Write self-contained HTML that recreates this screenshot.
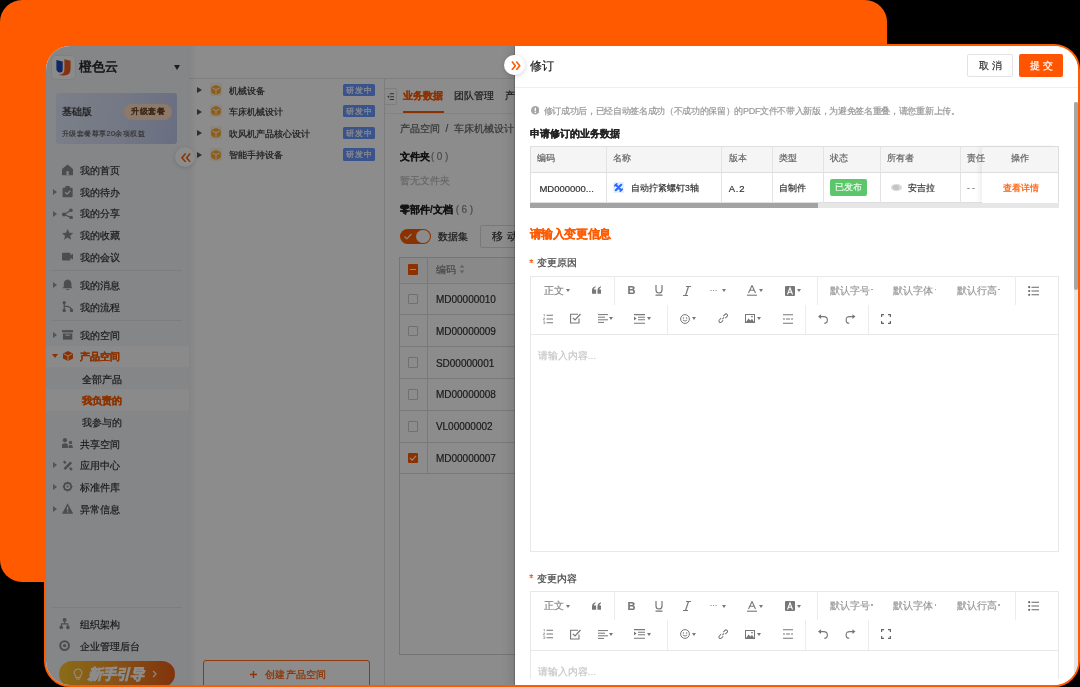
<!DOCTYPE html>
<html><head><meta charset="utf-8">
<style>
*{box-sizing:border-box;margin:0;padding:0}
html,body{width:1080px;height:687px;overflow:hidden;background:#000}
body{position:relative;font-family:"Liberation Sans",sans-serif;color:#222}
.abs{position:absolute}
.t{position:absolute;white-space:nowrap;line-height:1;-webkit-text-stroke:0.2px currentColor}
#orange{position:absolute;left:0;top:0;width:887px;height:582px;background:#ff5a00;border-radius:22px}
#win{position:absolute;left:44px;top:44px;width:1036px;height:643px;border:2px solid #ff5a00;border-radius:26px;overflow:hidden;background:#fff}
#app{position:absolute;left:-46px;top:-46px;width:1080px;height:687px;will-change:transform}
#side{position:absolute;left:46px;top:46px;width:143px;height:641px;background:#f2f4f7}
#list{position:absolute;left:189px;top:46px;width:196px;height:641px;background:#fff}
#main{position:absolute;left:385px;top:46px;width:200px;height:641px;background:#fff}
#mask{position:absolute;left:46px;top:46px;width:469px;height:641px;background:rgba(0,0,0,.45)}
#drawer{position:absolute;left:515px;top:46px;width:565px;height:641px;background:#fff;box-shadow:-4px 0 10px rgba(0,0,0,.12)}
.mi{font-size:10px;color:#333}
.ic{position:absolute}
</style></head><body>
<div id="orange"></div>
<div id="win"><div id="app">
  <!-- SIDEBAR -->
  <div id="side"></div>
  <div class="abs" style="left:46px;top:345.6px;width:143px;height:21.8px;background:#fbfbfb"></div>
    <div class="abs" style="left:46px;top:389px;width:143px;height:21.8px;background:#fbfbfb"></div>
  <div class="abs" style="left:51px;top:270px;width:131px;height:1px;background:#e3e3e3"></div>
  <div class="abs" style="left:51px;top:320px;width:131px;height:1px;background:#e3e3e3"></div>
  <div class="abs" style="left:51px;top:607px;width:131px;height:1px;background:#e3e3e3"></div>
  <div class="abs" style="left:50.5px;top:54.7px;width:25px;height:25.5px;border-radius:5px;background:#fdfdfd;border:1px solid #eaeaea"></div>
  <svg class="abs" style="left:50.5px;top:54.7px" width="25" height="25" viewBox="0 0 25 25">
    <path d="M5.4 5.1L11.7 6.6V15.2Q11.7 17.8 9 17.6Q5.4 17.2 5.4 13.5Z" fill="#1c49b8"/>
    <path d="M13.4 4.2L19.6 5.7V13.5Q19.6 20.6 12.5 20.5L7.6 20Q11.9 19.2 12.8 17.2Q13.4 16.2 13.4 14.6Z" fill="#ee5a1d"/>
  </svg>
  <div class="t" style="left:78.5px;top:60px;font-size:13px;line-height:14px;font-weight:normal;color:#222;-webkit-text-stroke:0.5px #222">橙色云</div>
  <div class="abs" style="left:174px;top:65px;width:0;height:0;border-top:5px solid #333;border-left:3.5px solid transparent;border-right:3.5px solid transparent"></div>
  <div class="abs" style="left:56px;top:93.4px;width:121px;height:50.6px;border-radius:3px;background:linear-gradient(100deg,#dfe7f8 0%,#d3dbf2 55%,#c0c8ec 100%)"></div>
  <div class="t" style="left:62px;top:106px;font-size:10px;line-height:11px;font-weight:500;color:#333;-webkit-text-stroke:0.25px #333">基础版</div>
  <div class="abs" style="left:124px;top:103.6px;width:48px;height:16px;border-radius:8px;background:#ffdcc0"></div>
  <div class="t" style="left:131px;top:107px;font-size:8px;line-height:9px;font-weight:normal;color:#6a4020;letter-spacing:0.5px;-webkit-text-stroke:0.45px #6a4020">升级套餐</div>
  <div class="t" style="left:62px;top:130px;font-size:7.4px;line-height:8px;color:#666;letter-spacing:0.4px">升级套餐尊享20余项权益</div>
  <div class="abs" style="left:58.6px;top:661px;width:116px;height:26px;border-radius:13px;background:linear-gradient(90deg,#fcc42c 0%,#f7952a 50%,#ec5e16 100%)"></div>
  <svg class="abs" style="left:72.5px;top:667.5px" width="10" height="13" viewBox="0 0 10 13"><path d="M5 1a3.8 3.8 0 0 1 2.2 6.9V9.5H2.8V7.9A3.8 3.8 0 0 1 5 1Z" fill="none" stroke="#fff" stroke-width="1.1"/><path d="M3.2 11h3.6" stroke="#fff" stroke-width="1.1"/></svg>
  <div class="t" style="left:87.5px;top:666.5px;font-size:14.2px;line-height:15px;font-weight:bold;font-style:italic;color:#fff;-webkit-text-stroke:0.7px #fff">新手引导</div>
  <svg class="abs" style="left:151.5px;top:670px" width="5" height="8" viewBox="0 0 5 8"><path d="M1 0.8L4 4L1 7.2" stroke="#fff" stroke-width="1.2" fill="none"/></svg>

<div class="t mi" style="left:79.5px;top:165.8px;height:10px;line-height:10px;color:#333;font-weight:normal">我的首页</div>
<svg class="abs" style="left:62.0px;top:164.4px" width="11.2" height="11.2" viewBox="0 0 10 10" fill="#8c8c8c"><path d="M5 0.5L10 4.5V10H0V4.5Z"/><rect x="4" y="6.5" width="2" height="3.5" fill="#f2f4f7"/></svg>
<div class="t mi" style="left:79.5px;top:187.8px;height:10px;line-height:10px;color:#333;font-weight:normal">我的待办</div>
<div class="abs" style="left:53px;top:189.0px;width:0;height:0;border-left:4px solid #999;border-top:3px solid transparent;border-bottom:3px solid transparent"></div>
<svg class="abs" style="left:62.0px;top:186.4px" width="11.2" height="11.2" viewBox="0 0 10 10" fill="#8c8c8c"><rect x="0.5" y="1.5" width="9" height="8.5" rx="0.8"/><rect x="3" y="0" width="4" height="2.5" rx="0.5"/><path d="M2.8 5.6l1.7 1.6 2.9-3" stroke="#f2f4f7" stroke-width="1.1" fill="none"/></svg>
<div class="t mi" style="left:79.5px;top:209.3px;height:10px;line-height:10px;color:#333;font-weight:normal">我的分享</div>
<div class="abs" style="left:53px;top:210.5px;width:0;height:0;border-left:4px solid #999;border-top:3px solid transparent;border-bottom:3px solid transparent"></div>
<svg class="abs" style="left:62.0px;top:207.9px" width="11.2" height="11.2" viewBox="0 0 10 10" fill="#8c8c8c"><circle cx="1.8" cy="5.8" r="1.8"/><circle cx="8" cy="2" r="1.6"/><circle cx="8.2" cy="8.6" r="1.6"/><path d="M1.8 5.8L8 2M1.8 5.8L8.2 8.6" stroke="#8c8c8c" stroke-width="1" fill="none"/></svg>
<div class="t mi" style="left:79.5px;top:230.8px;height:10px;line-height:10px;color:#333;font-weight:normal">我的收藏</div>
<svg class="abs" style="left:62.0px;top:229.4px" width="11.2" height="11.2" viewBox="0 0 10 10" fill="#8c8c8c"><path d="M5 0L6.5 3.4L10 3.7L7.3 6L8.1 9.6L5 7.7L1.9 9.6L2.7 6L0 3.7L3.5 3.4Z"/></svg>
<div class="t mi" style="left:79.5px;top:252.5px;height:10px;line-height:10px;color:#333;font-weight:normal">我的会议</div>
<svg class="abs" style="left:62.0px;top:251.1px" width="11.2" height="11.2" viewBox="0 0 10 10" fill="#8c8c8c"><rect x="0" y="1.5" width="7.5" height="7" rx="0.8"/><path d="M7 4L10 2.3V7.7L7 6Z"/></svg>
<div class="t mi" style="left:79.5px;top:280.6px;height:10px;line-height:10px;color:#333;font-weight:normal">我的消息</div>
<div class="abs" style="left:53px;top:281.8px;width:0;height:0;border-left:4px solid #999;border-top:3px solid transparent;border-bottom:3px solid transparent"></div>
<svg class="abs" style="left:62.0px;top:279.2px" width="11.2" height="11.2" viewBox="0 0 10 10" fill="#8c8c8c"><path d="M5 0.5C7.4 0.5 8.4 2.5 8.4 4.5V7L9.6 8.3H0.4L1.6 7V4.5C1.6 2.5 2.6 0.5 5 0.5Z"/><rect x="3.8" y="8.9" width="2.4" height="1.1" rx="0.5"/></svg>
<div class="t mi" style="left:79.5px;top:302.5px;height:10px;line-height:10px;color:#333;font-weight:normal">我的流程</div>
<svg class="abs" style="left:62.0px;top:301.1px" width="11.2" height="11.2" viewBox="0 0 10 10" fill="#8c8c8c"><circle cx="2" cy="1.5" r="1.4"/><circle cx="2" cy="8.5" r="1.5"/><circle cx="8.5" cy="8.5" r="1.5"/><path d="M2 1.5V8.5M2 4.5Q8.5 4.5 8.5 8.5" stroke="#8c8c8c" stroke-width="1.1" fill="none"/></svg>
<div class="t mi" style="left:79.5px;top:330.5px;height:10px;line-height:10px;color:#333;font-weight:normal">我的空间</div>
<div class="abs" style="left:53px;top:331.7px;width:0;height:0;border-left:4px solid #999;border-top:3px solid transparent;border-bottom:3px solid transparent"></div>
<svg class="abs" style="left:62.0px;top:329.1px" width="11.2" height="11.2" viewBox="0 0 10 10" fill="#8c8c8c"><rect x="0" y="1" width="10" height="2"/><rect x="0.8" y="4" width="8.4" height="5.5"/><rect x="3" y="5" width="4" height="1" fill="#f2f4f7"/></svg>
<div class="t mi" style="left:79.5px;top:352.1px;height:10px;line-height:10px;color:#ff5a00;font-weight:bold">产品空间</div>
<div class="abs" style="left:51.5px;top:354.3px;width:0;height:0;border-top:4px solid #ff5a00;border-left:3.5px solid transparent;border-right:3.5px solid transparent"></div>
<svg class="abs" style="left:62.5px;top:351.3px" width="10" height="10" viewBox="0 0 10 10" fill="#ff5a00"><path d="M5 0L10 2.5V7.5L5 10L0 7.5V2.5Z"/><path d="M0.6 2.8L5 5L9.4 2.8M5 5V9.8" stroke="#fff" stroke-width="0.9" fill="none"/></svg>
<div class="t mi" style="left:82px;top:374.8px;height:10px;line-height:10px;color:#333;font-weight:normal">全部产品</div>
<div class="t mi" style="left:82px;top:396.2px;height:10px;line-height:10px;color:#ff5a00;font-weight:bold">我负责的</div>
<div class="t mi" style="left:82px;top:417.6px;height:10px;line-height:10px;color:#333;font-weight:normal">我参与的</div>
<div class="t mi" style="left:79.5px;top:439.8px;height:10px;line-height:10px;color:#333;font-weight:normal">共享空间</div>
<svg class="abs" style="left:62.0px;top:438.4px" width="11.2" height="11.2" viewBox="0 0 10 10" fill="#8c8c8c"><circle cx="2.6" cy="2" r="1.9"/><path d="M0 9V6.5Q0 4.8 2.6 4.8Q5.2 4.8 5.2 6.5V9Z"/><circle cx="7.6" cy="4" r="1.5"/><path d="M5.8 9V7.6Q5.8 6.3 7.6 6.3Q9.6 6.3 9.6 7.6V9Z"/></svg>
<div class="t mi" style="left:79.5px;top:461.2px;height:10px;line-height:10px;color:#333;font-weight:normal">应用中心</div>
<div class="abs" style="left:53px;top:462.4px;width:0;height:0;border-left:4px solid #999;border-top:3px solid transparent;border-bottom:3px solid transparent"></div>
<svg class="abs" style="left:62.0px;top:459.8px" width="11.2" height="11.2" viewBox="0 0 10 10" fill="#8c8c8c"><path d="M0.8 1.8L2.3 0.5L4 2.2L2.5 3.6Z"/><path d="M2.2 8.2L8.2 2.2" stroke="#8c8c8c" stroke-width="2.2"/><path d="M6.2 7.6L7.6 6.2L9.6 8.2L8.2 9.6Z"/></svg>
<div class="t mi" style="left:79.5px;top:482.8px;height:10px;line-height:10px;color:#333;font-weight:normal">标准件库</div>
<div class="abs" style="left:53px;top:484.0px;width:0;height:0;border-left:4px solid #999;border-top:3px solid transparent;border-bottom:3px solid transparent"></div>
<svg class="abs" style="left:62.0px;top:481.4px" width="11.2" height="11.2" viewBox="0 0 10 10" fill="#8c8c8c"><circle cx="5" cy="5" r="3.2" fill="none" stroke="#8c8c8c" stroke-width="1.7"/><circle cx="5" cy="5" r="0.9"/><path d="M5 0.2L6 1.8H4ZM5 9.8L6 8.2H4ZM0.2 5L1.8 4V6ZM9.8 5L8.2 4V6ZM1.6 1.6L3.4 2.1L2.1 3.4ZM8.4 8.4L6.6 7.9L7.9 6.6ZM8.4 1.6L7.9 3.4L6.6 2.1ZM1.6 8.4L2.1 6.6L3.4 7.9Z"/></svg>
<div class="t mi" style="left:79.5px;top:504.6px;height:10px;line-height:10px;color:#333;font-weight:normal">异常信息</div>
<div class="abs" style="left:53px;top:505.8px;width:0;height:0;border-left:4px solid #999;border-top:3px solid transparent;border-bottom:3px solid transparent"></div>
<svg class="abs" style="left:62.0px;top:503.2px" width="11.2" height="11.2" viewBox="0 0 10 10" fill="#8c8c8c"><path d="M5 0.3L10 9.5H0Z"/><rect x="4.4" y="3.3" width="1.2" height="3.3" fill="#f2f4f7"/><rect x="4.4" y="7.3" width="1.2" height="1.2" fill="#f2f4f7"/></svg>
<div class="t mi" style="left:79.5px;top:619.8px;height:10px;line-height:10px;color:#333;font-weight:normal">组织架构</div>
<svg class="abs" style="left:59.0px;top:618.4px" width="11.2" height="11.2" viewBox="0 0 10 10" fill="#8c8c8c"><circle cx="5" cy="1.8" r="1.8"/><path d="M2.2 7.5V5.3H7.8V7.5M5 3.5V5.3" stroke="#8c8c8c" stroke-width="1" fill="none"/><circle cx="2" cy="8.4" r="1.6"/><circle cx="8" cy="8.4" r="1.6"/></svg>
<div class="t mi" style="left:79.5px;top:641.8px;height:10px;line-height:10px;color:#333;font-weight:normal">企业管理后台</div>
<svg class="abs" style="left:59.0px;top:640.4px" width="11.2" height="11.2" viewBox="0 0 10 10" fill="#8c8c8c"><circle cx="5" cy="5" r="4.8"/><circle cx="5" cy="5" r="3" fill="#f2f4f7"/><circle cx="5" cy="5" r="1.5"/></svg>
  <div id="list"></div>
  <div id="main"></div>
  <div class="abs" style="left:189px;top:78px;width:326px;height:1px;background:#e8e8e8"></div>
<div class="abs" style="left:384px;top:78px;width:1px;height:609px;background:#e3e3e3"></div>
<div class="abs" style="left:189px;top:46px;width:8px;height:641px;background:linear-gradient(90deg,rgba(0,0,0,.05),rgba(0,0,0,0))"></div>
<div class="abs" style="left:197.3px;top:87.2px;width:0;height:0;border-left:5px solid #555;border-top:3.2px solid transparent;border-bottom:3.2px solid transparent"></div>
<div class="abs" style="left:209.5px;top:83.4px;width:12.8px;height:12.5px;background:#fff3e3;border-radius:1px"></div>
<svg class="abs" style="left:211px;top:84.8px" width="10" height="10" viewBox="0 0 10 10"><path d="M5 0.2Q6 0.2 8.6 1.6Q9.8 2.3 9.8 3.6V6.4Q9.8 7.7 8.6 8.4Q6 9.8 5 9.8Q4 9.8 1.4 8.4Q0.2 7.7 0.2 6.4V3.6Q0.2 2.3 1.4 1.6Q4 0.2 5 0.2Z" fill="#ffab2e"/><path d="M1.6 2.9L5 4.8L8.4 2.9M5 4.8V9.6" stroke="#fff1de" stroke-width="1.1" fill="none"/></svg>
<div class="t" style="left:229px;top:85.6px;font-size:9.3px;line-height:10px;color:#333">机械设备</div>
<div class="abs" style="left:343px;top:83.6px;width:31.6px;height:12.4px;background:#6898ff;border-radius:1.5px"></div>
<div class="t" style="left:346px;top:85.7px;font-size:8.3px;line-height:9px;color:#fff;letter-spacing:1px">研发中</div>
<div class="abs" style="left:197.3px;top:108.5px;width:0;height:0;border-left:5px solid #555;border-top:3.2px solid transparent;border-bottom:3.2px solid transparent"></div>
<div class="abs" style="left:209.5px;top:104.7px;width:12.8px;height:12.5px;background:#fff3e3;border-radius:1px"></div>
<svg class="abs" style="left:211px;top:106.1px" width="10" height="10" viewBox="0 0 10 10"><path d="M5 0.2Q6 0.2 8.6 1.6Q9.8 2.3 9.8 3.6V6.4Q9.8 7.7 8.6 8.4Q6 9.8 5 9.8Q4 9.8 1.4 8.4Q0.2 7.7 0.2 6.4V3.6Q0.2 2.3 1.4 1.6Q4 0.2 5 0.2Z" fill="#ffab2e"/><path d="M1.6 2.9L5 4.8L8.4 2.9M5 4.8V9.6" stroke="#fff1de" stroke-width="1.1" fill="none"/></svg>
<div class="t" style="left:229px;top:106.9px;font-size:9.3px;line-height:10px;color:#333">车床机械设计</div>
<div class="abs" style="left:343px;top:104.9px;width:31.6px;height:12.4px;background:#6898ff;border-radius:1.5px"></div>
<div class="t" style="left:346px;top:107.0px;font-size:8.3px;line-height:9px;color:#fff;letter-spacing:1px">研发中</div>
<div class="abs" style="left:197.3px;top:130.2px;width:0;height:0;border-left:5px solid #555;border-top:3.2px solid transparent;border-bottom:3.2px solid transparent"></div>
<div class="abs" style="left:209.5px;top:126.4px;width:12.8px;height:12.5px;background:#fff3e3;border-radius:1px"></div>
<svg class="abs" style="left:211px;top:127.8px" width="10" height="10" viewBox="0 0 10 10"><path d="M5 0.2Q6 0.2 8.6 1.6Q9.8 2.3 9.8 3.6V6.4Q9.8 7.7 8.6 8.4Q6 9.8 5 9.8Q4 9.8 1.4 8.4Q0.2 7.7 0.2 6.4V3.6Q0.2 2.3 1.4 1.6Q4 0.2 5 0.2Z" fill="#ffab2e"/><path d="M1.6 2.9L5 4.8L8.4 2.9M5 4.8V9.6" stroke="#fff1de" stroke-width="1.1" fill="none"/></svg>
<div class="t" style="left:229px;top:128.6px;font-size:9.3px;line-height:10px;color:#333">吹风机产品核心设计</div>
<div class="abs" style="left:343px;top:126.6px;width:31.6px;height:12.4px;background:#6898ff;border-radius:1.5px"></div>
<div class="t" style="left:346px;top:128.7px;font-size:8.3px;line-height:9px;color:#fff;letter-spacing:1px">研发中</div>
<div class="abs" style="left:197.3px;top:151.9px;width:0;height:0;border-left:5px solid #555;border-top:3.2px solid transparent;border-bottom:3.2px solid transparent"></div>
<div class="abs" style="left:209.5px;top:148.1px;width:12.8px;height:12.5px;background:#fff3e3;border-radius:1px"></div>
<svg class="abs" style="left:211px;top:149.5px" width="10" height="10" viewBox="0 0 10 10"><path d="M5 0.2Q6 0.2 8.6 1.6Q9.8 2.3 9.8 3.6V6.4Q9.8 7.7 8.6 8.4Q6 9.8 5 9.8Q4 9.8 1.4 8.4Q0.2 7.7 0.2 6.4V3.6Q0.2 2.3 1.4 1.6Q4 0.2 5 0.2Z" fill="#ffab2e"/><path d="M1.6 2.9L5 4.8L8.4 2.9M5 4.8V9.6" stroke="#fff1de" stroke-width="1.1" fill="none"/></svg>
<div class="t" style="left:229px;top:150.3px;font-size:9.3px;line-height:10px;color:#333">智能手持设备</div>
<div class="abs" style="left:343px;top:148.3px;width:31.6px;height:12.4px;background:#6898ff;border-radius:1.5px"></div>
<div class="t" style="left:346px;top:150.4px;font-size:8.3px;line-height:9px;color:#fff;letter-spacing:1px">研发中</div>
<div class="abs" style="left:203.4px;top:660px;width:167px;height:40px;border:1px solid #ff6a1a;border-radius:3px"></div>
<svg class="abs" style="left:250px;top:671.3px" width="7" height="7" viewBox="0 0 7 7"><path d="M3.5 0V7M0 3.5H7" stroke="#ff5a00" stroke-width="1.3"/></svg>
<div class="t" style="left:265px;top:670px;font-size:10px;line-height:10px;color:#ff5a00;letter-spacing:0.3px">创建产品空间</div>
<div class="abs" style="left:384.8px;top:88px;width:12px;height:16.5px;background:#fff;border:1px solid #e5e5e5;border-left:none;border-radius:0 2px 2px 0"></div>
<svg class="abs" style="left:386.6px;top:92.6px" width="7.6" height="7.4" viewBox="0 0 7.6 7.4"><path d="M2.8 0.8H7.4M3.2 3.7H7.4M2.8 6.6H7.4" stroke="#555" stroke-width="1.1"/><path d="M0.2 3.7L2.2 2.3V5.1Z" fill="#555"/></svg>
<div class="t" style="left:403px;top:91px;font-size:10px;line-height:10px;color:#ff5a00;font-weight:bold">业务数据</div>
<div class="abs" style="left:403px;top:111px;width:40.5px;height:2px;background:#ff5a00"></div>
<div class="t" style="left:454px;top:90.8px;font-size:10px;line-height:10px;color:#333">团队管理</div>
<div class="t" style="left:504.6px;top:90.8px;font-size:10px;line-height:10px;color:#333">产品</div>
<div class="abs" style="left:385px;top:113px;width:130px;height:1px;background:#eee"></div>
<div class="t" style="left:400px;top:123.6px;font-size:10px;line-height:10px;color:#666">产品空间 &nbsp;/ &nbsp;车床机械设计</div>
<div class="t" style="left:400px;top:152px;font-size:10px;line-height:10px;color:#222;font-weight:bold">文件夹<span style="font-weight:normal;color:#888;letter-spacing:2.5px;margin-left:1px">(0)</span></div>
<div class="t" style="left:400px;top:176px;font-size:10px;line-height:10px;color:#bbb">暂无文件夹</div>
<div class="t" style="left:400px;top:205.2px;font-size:10px;line-height:10px;color:#222;font-weight:bold">零部件/文档<span style="font-weight:normal;color:#888;letter-spacing:2.5px;margin-left:3px">(6)</span></div>
<div class="abs" style="left:399.8px;top:228.6px;width:31.4px;height:15.8px;border-radius:8px;background:#ff5a00"></div>
<div class="abs" style="left:416.3px;top:229.8px;width:13.4px;height:13.4px;border-radius:50%;background:#fff"></div>
<svg class="abs" style="left:404px;top:233px" width="8" height="7" viewBox="0 0 8 7"><path d="M0.6 3.5L2.9 5.8L7.4 1" stroke="#fff" stroke-width="1.1" fill="none"/></svg>
<div class="t" style="left:437.6px;top:232px;font-size:10px;line-height:10px;color:#333">数据集</div>
<div class="abs" style="left:480px;top:225px;width:60px;height:22.5px;border:1px solid #ddd;background:#fff;border-radius:2px"></div>
<div class="t" style="left:492px;top:231px;font-size:10.5px;line-height:11px;color:#333;letter-spacing:4px">移动</div>
<div class="abs" style="left:399.4px;top:256.6px;width:130px;height:398px;border:1px solid #d6d6d6;border-right:none"></div>
<div class="abs" style="left:400.4px;top:257.6px;width:130px;height:24.9px;background:#fafafa"></div>
<div class="abs" style="left:399.4px;top:282.5px;width:130px;height:1px;background:#dcdcdc"></div>
<div class="abs" style="left:399.4px;top:314.3px;width:130px;height:1px;background:#dcdcdc"></div>
<div class="abs" style="left:399.4px;top:346.4px;width:130px;height:1px;background:#dcdcdc"></div>
<div class="abs" style="left:399.4px;top:378.0px;width:130px;height:1px;background:#dcdcdc"></div>
<div class="abs" style="left:399.4px;top:409.7px;width:130px;height:1px;background:#dcdcdc"></div>
<div class="abs" style="left:399.4px;top:441.6px;width:130px;height:1px;background:#dcdcdc"></div>
<div class="abs" style="left:399.4px;top:473.4px;width:130px;height:1px;background:#dcdcdc"></div>
<div class="abs" style="left:427.3px;top:256.6px;width:1px;height:216.8px;background:#dcdcdc"></div>
<div class="abs" style="left:407.7px;top:263.8px;width:10.8px;height:10.8px;background:#ff5a00;border-radius:1px"></div>
<div class="abs" style="left:410px;top:268.7px;width:6.2px;height:1.1px;background:#fff"></div>
<div class="t" style="left:435.8px;top:264.5px;font-size:9.5px;line-height:10px;color:#888">编码</div>
<svg class="abs" style="left:459px;top:264px" width="6" height="10" viewBox="0 0 6 10"><path d="M3 0.5L5.5 3.8H0.5ZM3 9.5L5.5 6.2H0.5Z" fill="#bbb"/></svg>
<div class="abs" style="left:407.7px;top:293.5px;width:10.8px;height:10.8px;border:1px solid #ccc;background:#fff;border-radius:1px"></div>
<div class="t" style="left:435.9px;top:294.9px;font-size:10px;line-height:10px;color:#333">MD00000010</div>
<div class="abs" style="left:407.7px;top:325.5px;width:10.8px;height:10.8px;border:1px solid #ccc;background:#fff;border-radius:1px"></div>
<div class="t" style="left:435.9px;top:326.9px;font-size:10px;line-height:10px;color:#333">MD00000009</div>
<div class="abs" style="left:407.7px;top:357.3px;width:10.8px;height:10.8px;border:1px solid #ccc;background:#fff;border-radius:1px"></div>
<div class="t" style="left:435.9px;top:358.7px;font-size:10px;line-height:10px;color:#333">SD00000001</div>
<div class="abs" style="left:407.7px;top:389.0px;width:10.8px;height:10.8px;border:1px solid #ccc;background:#fff;border-radius:1px"></div>
<div class="t" style="left:435.9px;top:390.4px;font-size:10px;line-height:10px;color:#333">MD00000008</div>
<div class="abs" style="left:407.7px;top:420.8px;width:10.8px;height:10.8px;border:1px solid #ccc;background:#fff;border-radius:1px"></div>
<div class="t" style="left:435.9px;top:422.1px;font-size:10px;line-height:10px;color:#333">VL00000002</div>
<div class="abs" style="left:407.7px;top:452.6px;width:10.8px;height:10.8px;background:#ff5a00;border-radius:1px"></div>
<svg class="abs" style="left:409px;top:454.0px" width="8" height="8" viewBox="0 0 8 8"><path d="M1 4L3.2 6.2L7 1.8" stroke="#fff" stroke-width="1.1" fill="none"/></svg>
<div class="t" style="left:435.9px;top:454.0px;font-size:10px;line-height:10px;color:#333">MD00000007</div>
<div class="abs" style="left:175.4px;top:147.4px;width:20px;height:20px;border-radius:50%;background:#fff;box-shadow:0 1px 4px rgba(0,0,0,.15)"></div>
<svg class="abs" style="left:180.5px;top:152.5px" width="10" height="9.5" viewBox="0 0 10 9.5"><path d="M4.6 0.6L1 4.75L4.6 8.9M9.2 0.6L5.6 4.75L9.2 8.9" stroke="#ff5a00" stroke-width="1.5" fill="none"/></svg>
<div id="mask"></div>
  <div id="drawer"></div>
<div class="abs" style="left:513.5px;top:46px;width:1.2px;height:641px;background:rgba(0,0,0,.18)"></div>
<div class="t" style="left:529.6px;top:60px;font-size:11.6px;line-height:12px;color:#222;font-weight:500">修订</div>
<div class="abs" style="left:967.2px;top:54.2px;width:45.4px;height:22.9px;border:1px solid #e3e3e3;border-radius:2px;background:#fff"></div>
<div class="t" style="left:979px;top:60.4px;font-size:10px;line-height:11px;color:#333;letter-spacing:3px">取消</div>
<div class="abs" style="left:1018.8px;top:54.2px;width:44.7px;height:22.9px;border-radius:2px;background:#ff5500"></div>
<div class="t" style="left:1029.5px;top:60.4px;font-size:10px;line-height:11px;color:#fff;letter-spacing:3px">提交</div>
<div class="abs" style="left:515px;top:86.5px;width:565px;height:1px;background:#eeeeee"></div>
<div class="abs" style="left:504.2px;top:54.9px;width:20.6px;height:20.6px;border-radius:50%;background:#fff;box-shadow:0 1px 5px rgba(0,0,0,.18)"></div>
<svg class="abs" style="left:510.6px;top:60.6px" width="10" height="9.6" viewBox="0 0 10 9.6"><path d="M0.9 0.6L4.3 4.8L0.9 9M5.3 0.6L8.7 4.8L5.3 9" stroke="#ff5a00" stroke-width="1.6" fill="none"/></svg>
<svg class="abs" style="left:530.8px;top:106.4px" width="8.6" height="8.6" viewBox="0 0 10 10"><circle cx="5" cy="5" r="5" fill="#a6a6a6"/><rect x="4.2" y="2" width="1.6" height="3.8" fill="#fff"/><rect x="4.2" y="6.6" width="1.6" height="1.6" fill="#fff"/></svg>
<div class="t" style="left:543.7px;top:107px;font-size:9px;line-height:9px;color:#999;letter-spacing:-0.33px">修订成功后，已经自动签名成功（不成功的保留）的PDF文件不带入新版，为避免签名重叠，请您重新上传。</div>
<div class="t" style="left:530px;top:128.6px;font-size:10px;line-height:10px;color:#222;font-weight:bold">申请修订的业务数据</div>
<div class="abs" style="left:529.9px;top:145.7px;width:528.8px;height:57.3px;border:1px solid #dedede;background:#fff"></div>
<div class="abs" style="left:530.9px;top:146.7px;width:526.8px;height:24.9px;background:#f5f5f5"></div>
<div class="abs" style="left:529.9px;top:171.6px;width:528.8px;height:1px;background:#dedede"></div>
<div class="abs" style="left:605.6px;top:145.7px;width:1px;height:57.3px;background:#e3e3e3"></div>
<div class="abs" style="left:721.0px;top:145.7px;width:1px;height:57.3px;background:#e3e3e3"></div>
<div class="abs" style="left:771.5px;top:145.7px;width:1px;height:57.3px;background:#e3e3e3"></div>
<div class="abs" style="left:822.6px;top:145.7px;width:1px;height:57.3px;background:#e3e3e3"></div>
<div class="abs" style="left:879.6px;top:145.7px;width:1px;height:57.3px;background:#e3e3e3"></div>
<div class="abs" style="left:959.5px;top:145.7px;width:1px;height:57.3px;background:#e3e3e3"></div>
<div class="abs" style="left:981.5px;top:146.7px;width:76.2px;height:56px;background:transparent;box-shadow:-3px 0 4px rgba(0,0,0,.06)"></div>
<div class="abs" style="left:981.5px;top:146.7px;width:76.2px;height:24.9px;background:#f5f5f5"></div>
<div class="abs" style="left:981.5px;top:171.6px;width:76.2px;height:1px;background:#dedede"></div>
<div class="abs" style="left:981.5px;top:172.6px;width:76.2px;height:30.4px;background:#fff"></div>
<div class="abs" style="left:529.9px;top:203px;width:528.8px;height:4.5px;background:#e6e6e6"></div>
<div class="abs" style="left:529.9px;top:203px;width:288px;height:4.5px;background:#a3a3a3"></div>
<div class="t" style="left:536.9px;top:154.2px;font-size:9px;line-height:9px;color:#666">编码</div>
<div class="t" style="left:613.3px;top:154.2px;font-size:9px;line-height:9px;color:#666">名称</div>
<div class="t" style="left:728.7px;top:154.2px;font-size:9px;line-height:9px;color:#666">版本</div>
<div class="t" style="left:779.3px;top:154.2px;font-size:9px;line-height:9px;color:#666">类型</div>
<div class="t" style="left:829.8px;top:154.2px;font-size:9px;line-height:9px;color:#666">状态</div>
<div class="t" style="left:887.4px;top:154.2px;font-size:9px;line-height:9px;color:#666">所有者</div>
<div class="t" style="left:967.2px;top:154.2px;font-size:9px;line-height:9px;color:#666">责任</div>
<div class="t" style="left:1011px;top:154.2px;font-size:9px;line-height:9px;color:#666">操作</div>
<div class="t" style="left:539.4px;top:183.8px;font-size:9.5px;line-height:9px;color:#333">MD000000...</div>
<div class="abs" style="left:613.3px;top:182px;width:10.9px;height:10.9px;background:#e6efff;border-radius:1px"></div>
<svg class="abs" style="left:614.3px;top:183px" width="9" height="9" viewBox="0 0 10 10"><path d="M2 2L8 8M8 2L2 8" stroke="#2a6cf6" stroke-width="2.4" stroke-linecap="round"/><path d="M0.8 3.2L3.2 0.8M6.8 9.2L9.2 6.8" stroke="#2a6cf6" stroke-width="1.6" stroke-linecap="round"/></svg>
<div class="t" style="left:631px;top:183.8px;font-size:8.6px;line-height:9px;color:#333">自动拧紧螺钉3轴</div>
<div class="t" style="left:728.7px;top:183.8px;font-size:9.5px;line-height:9px;color:#333;letter-spacing:0.8px">A.2</div>
<div class="t" style="left:779px;top:183.8px;font-size:8.6px;line-height:9px;color:#333">自制件</div>
<div class="abs" style="left:829.8px;top:178.9px;width:37.1px;height:16.8px;background:#5bc76a;border-radius:2px"></div>
<div class="t" style="left:835.3px;top:183.3px;font-size:8.6px;line-height:9px;color:#eaf8ec">已发布</div>
<div class="abs" style="left:890.7px;top:184px;width:11.7px;height:7px;border-radius:50%;background:#d9d9d9"></div>
<div class="abs" style="left:893px;top:185.3px;width:6px;height:4.4px;border-radius:50%;background:#c4c4c4"></div>
<div class="t" style="left:907.6px;top:183.8px;font-size:8.6px;line-height:9px;color:#333">安吉拉</div>
<div class="t" style="left:967px;top:183.8px;font-size:9px;line-height:9px;color:#888;letter-spacing:2px">--</div>
<div class="t" style="left:1002.5px;top:183.8px;font-size:8.6px;line-height:9px;color:#ff5a00">查看详情</div>
<div class="t" style="left:529.8px;top:228px;font-size:11.8px;line-height:12px;color:#ff5a00;font-weight:bold;letter-spacing:-0.45px">请输入变更信息</div>
<div class="abs" style="left:515px;top:88px;width:565px;height:591px;overflow:hidden" id="dscroll"><div class="abs" style="left:-515px;top:-88px;width:1080px;height:687px">
<svg class="abs" style="left:529.4px;top:258.7px" width="4.6" height="4.6" viewBox="0 0 10 10"><path d="M5 0.5V9.5M1.1 2.75L8.9 7.25M1.1 7.25L8.9 2.75" stroke="#ff5a00" stroke-width="2.2"/></svg>
<div class="t" style="left:537px;top:258.3px;font-size:10px;line-height:10px;color:#444">变更原因</div>
<div class="abs" style="left:529.5px;top:275.5px;width:529.2px;height:276.7px;border:1px solid #e8e8e8;background:#fff"></div>
<div class="abs" style="left:529.5px;top:333.9px;width:529.2px;height:1px;background:#e8e8e8"></div>
<div class="abs" style="left:614.4px;top:275.5px;width:1px;height:29px;background:#ececec"></div>
<div class="abs" style="left:817px;top:275.5px;width:1px;height:29px;background:#ececec"></div>
<div class="abs" style="left:1015.3px;top:275.5px;width:1px;height:29px;background:#ececec"></div>
<div class="abs" style="left:667.3px;top:304.5px;width:1px;height:29.4px;background:#ececec"></div>
<div class="abs" style="left:805.3px;top:304.5px;width:1px;height:29.4px;background:#ececec"></div>
<div class="abs" style="left:868.2px;top:304.5px;width:1px;height:29.4px;background:#ececec"></div>
<div class="t" style="left:543.6px;top:285.6px;font-size:10px;line-height:10px;color:#888">正文</div>
<div class="abs" style="left:566.1px;top:289.2px;width:0;height:0;border-top:3.2px solid #777;border-left:2.6px solid transparent;border-right:2.6px solid transparent"></div>
<svg class="abs" style="left:591.6px;top:286.2px" width="9.6" height="8" viewBox="0 0 10 8"><path d="M0 8V4.5Q0 1 3.5 0L4 1Q2 1.8 2 3.5H4.3V8ZM5.7 8V4.5Q5.7 1 9.2 0L9.7 1Q7.7 1.8 7.7 3.5H10V8Z" fill="#777"/></svg>
<div class="t" style="left:627.5px;top:285.1px;font-size:11px;line-height:11px;color:#777;font-weight:bold">B</div>
<svg class="abs" style="left:655px;top:285.1px" width="8" height="11" viewBox="0 0 8 11"><path d="M1 0V5Q1 8 4 8Q7 8 7 5V0M0.5 10.2H7.5" stroke="#777" stroke-width="1.2" fill="none"/></svg>
<svg class="abs" style="left:683px;top:285.6px" width="8" height="10" viewBox="0 0 8 10"><path d="M3 0.5H8M0 9.5H5M5.5 0.5L2.5 9.5" stroke="#777" stroke-width="1.2" fill="none"/></svg>
<div class="t" style="left:709.5px;top:286.6px;font-size:9px;line-height:6px;color:#888;letter-spacing:-0.5px">···</div>
<div class="abs" style="left:721.6px;top:289.2px;width:0;height:0;border-top:3.2px solid #777;border-left:2.6px solid transparent;border-right:2.6px solid transparent"></div>
<svg class="abs" style="left:746.5px;top:285.1px" width="10" height="11" viewBox="0 0 10 11"><path d="M1.5 8L5 0.5L8.5 8M2.8 5.3H7.2" stroke="#777" stroke-width="1.1" fill="none"/><path d="M0 10.2H10" stroke="#777" stroke-width="1.1"/></svg>
<div class="abs" style="left:759.1px;top:289.2px;width:0;height:0;border-top:3.2px solid #777;border-left:2.6px solid transparent;border-right:2.6px solid transparent"></div>
<svg class="abs" style="left:784.5px;top:285.6px" width="10" height="10" viewBox="0 0 10 10"><rect width="10" height="10" rx="1" fill="#777"/><path d="M2.5 8.5L5 1.8L7.5 8.5M3.4 6.3H6.6" stroke="#fff" stroke-width="1.1" fill="none"/></svg>
<div class="abs" style="left:796.6px;top:289.2px;width:0;height:0;border-top:3.2px solid #777;border-left:2.6px solid transparent;border-right:2.6px solid transparent"></div>
<div class="t" style="left:829.6px;top:285.6px;font-size:10px;line-height:10px;color:#999">默认字号</div>
<div class="abs" style="left:871.1px;top:288.6px;width:1.6px;height:1.6px;background:#999;border-radius:50%"></div>
<div class="t" style="left:893.4px;top:285.6px;font-size:10px;line-height:10px;color:#999">默认字体</div>
<div class="abs" style="left:934.9px;top:288.6px;width:1.6px;height:1.6px;background:#999;border-radius:50%"></div>
<div class="t" style="left:956.6px;top:285.6px;font-size:10px;line-height:10px;color:#999">默认行高</div>
<div class="abs" style="left:998.1px;top:288.6px;width:1.6px;height:1.6px;background:#999;border-radius:50%"></div>
<svg class="abs" style="left:1028px;top:285.6px" width="11" height="10" viewBox="0 0 11 10"><circle cx="1.2" cy="1.2" r="1.1" fill="#666"/><circle cx="1.2" cy="5" r="1.1" fill="#666"/><circle cx="1.2" cy="8.8" r="1.1" fill="#666"/><path d="M3.5 1.2H11M3.5 5H11M3.5 8.8H11" stroke="#666" stroke-width="1.1"/></svg>
<svg class="abs" style="left:543px;top:313.6px" width="10" height="10" viewBox="0 0 10 10"><path d="M3.5 1.2H10M3.5 5H10M3.5 8.8H10" stroke="#777" stroke-width="1.1"/><path d="M0.5 0.3H1.4V2.3M0.3 4H1.8L0.3 6H1.9M0.3 7.8H1.8V9.6H0.3" stroke="#777" stroke-width="0.6" fill="none"/></svg>
<svg class="abs" style="left:569.5px;top:313.1px" width="11" height="11" viewBox="0 0 11 11"><path d="M9 5.5V10H0.6V1.2H8" stroke="#777" stroke-width="1.1" fill="none"/><path d="M2.8 4.8L5 7L10.5 1" stroke="#777" stroke-width="1.2" fill="none"/></svg>
<svg class="abs" style="left:597.5px;top:314.1px" width="10" height="9" viewBox="0 0 10 9"><path d="M0 0.6H10M0 3.2H7M0 5.8H10M0 8.4H6" stroke="#777" stroke-width="1"/></svg>
<div class="abs" style="left:609.1px;top:317.2px;width:0;height:0;border-top:3.2px solid #777;border-left:2.6px solid transparent;border-right:2.6px solid transparent"></div>
<svg class="abs" style="left:634.4px;top:313.6px" width="11" height="10" viewBox="0 0 11 10"><path d="M0 0.6H11M4 3.2H11M4 5.8H11M0 9.2H11" stroke="#777" stroke-width="1.1"/><path d="M0 2.5L2.6 4.5L0 6.5Z" fill="#777"/></svg>
<div class="abs" style="left:647.1px;top:317.2px;width:0;height:0;border-top:3.2px solid #777;border-left:2.6px solid transparent;border-right:2.6px solid transparent"></div>
<svg class="abs" style="left:680px;top:313.6px" width="10" height="10" viewBox="0 0 10 10"><circle cx="5" cy="5" r="4.4" stroke="#777" stroke-width="1" fill="none"/><circle cx="3.4" cy="4" r="0.7" fill="#777"/><circle cx="6.6" cy="4" r="0.7" fill="#777"/><path d="M2.8 6Q5 8.2 7.2 6" stroke="#777" stroke-width="0.9" fill="none"/></svg>
<div class="abs" style="left:692.1px;top:317.2px;width:0;height:0;border-top:3.2px solid #777;border-left:2.6px solid transparent;border-right:2.6px solid transparent"></div>
<svg class="abs" style="left:717.8px;top:313.4px" width="10.4" height="10.4" viewBox="0 0 10 10"><path d="M4.2 5.8L5.8 4.2M3 5L1.5 6.5Q0.3 7.7 1.3 8.7Q2.3 9.7 3.5 8.5L5 7M5 3L6.5 1.5Q7.7 0.3 8.7 1.3Q9.7 2.3 8.5 3.5L7 5" stroke="#777" stroke-width="1" fill="none"/></svg>
<svg class="abs" style="left:745px;top:314.1px" width="10" height="9" viewBox="0 0 10 9"><rect x="0.5" y="0.5" width="9" height="8" stroke="#777" fill="none"/><path d="M1 8L3.5 4.5L5.5 6.5L7 4.8L9 8Z" fill="#777"/><circle cx="7" cy="2.6" r="0.9" fill="#777"/></svg>
<div class="abs" style="left:756.6px;top:317.2px;width:0;height:0;border-top:3.2px solid #777;border-left:2.6px solid transparent;border-right:2.6px solid transparent"></div>
<svg class="abs" style="left:783px;top:313.6px" width="10" height="10" viewBox="0 0 10 10"><path d="M0 0.8H10M0 9.2H10" stroke="#777" stroke-width="1.1"/><path d="M0 5H2M3 5H7M8 5H10" stroke="#777" stroke-width="1"/></svg>
<svg class="abs" style="left:818px;top:313.6px" width="10.5" height="10" viewBox="0 0 11 10"><path d="M2.5 2.5H6Q9.8 2.5 9.8 6Q9.8 9.5 6.5 9.5" stroke="#777" stroke-width="1.2" fill="none"/><path d="M0 2.5L3.2 0V5Z" fill="#777"/></svg>
<svg class="abs" style="left:845px;top:313.6px" width="10.5" height="10" viewBox="0 0 11 10"><path d="M8.5 2.5H5Q1.2 2.5 1.2 6Q1.2 9.5 4.5 9.5" stroke="#777" stroke-width="1.2" fill="none"/><path d="M11 2.5L7.8 0V5Z" fill="#777"/></svg>
<svg class="abs" style="left:881px;top:313.6px" width="10" height="10" viewBox="0 0 10 10"><path d="M0.6 3V0.6H3M7 0.6H9.4V3M9.4 7V9.4H7M3 9.4H0.6V7" stroke="#666" stroke-width="1.2" fill="none"/></svg>
<div class="t" style="left:537.8px;top:351.3px;font-size:9.9px;line-height:10px;color:#c8c8c8">请输入内容...</div>
<svg class="abs" style="left:529.4px;top:574.4px" width="4.6" height="4.6" viewBox="0 0 10 10"><path d="M5 0.5V9.5M1.1 2.75L8.9 7.25M1.1 7.25L8.9 2.75" stroke="#ff5a00" stroke-width="2.2"/></svg>
<div class="t" style="left:537px;top:574px;font-size:10px;line-height:10px;color:#444">变更内容</div>
<div class="abs" style="left:529.5px;top:591.3px;width:529.2px;height:168.7px;border:1px solid #e8e8e8;background:#fff"></div>
<div class="abs" style="left:529.5px;top:649.7px;width:529.2px;height:1px;background:#e8e8e8"></div>
<div class="abs" style="left:614.4px;top:591.3px;width:1px;height:29px;background:#ececec"></div>
<div class="abs" style="left:817px;top:591.3px;width:1px;height:29px;background:#ececec"></div>
<div class="abs" style="left:1015.3px;top:591.3px;width:1px;height:29px;background:#ececec"></div>
<div class="abs" style="left:667.3px;top:620.3px;width:1px;height:29.4px;background:#ececec"></div>
<div class="abs" style="left:805.3px;top:620.3px;width:1px;height:29.4px;background:#ececec"></div>
<div class="abs" style="left:868.2px;top:620.3px;width:1px;height:29.4px;background:#ececec"></div>
<div class="t" style="left:543.6px;top:601.4px;font-size:10px;line-height:10px;color:#888">正文</div>
<div class="abs" style="left:566.1px;top:605.0px;width:0;height:0;border-top:3.2px solid #777;border-left:2.6px solid transparent;border-right:2.6px solid transparent"></div>
<svg class="abs" style="left:591.6px;top:602.0px" width="9.6" height="8" viewBox="0 0 10 8"><path d="M0 8V4.5Q0 1 3.5 0L4 1Q2 1.8 2 3.5H4.3V8ZM5.7 8V4.5Q5.7 1 9.2 0L9.7 1Q7.7 1.8 7.7 3.5H10V8Z" fill="#777"/></svg>
<div class="t" style="left:627.5px;top:600.9px;font-size:11px;line-height:11px;color:#777;font-weight:bold">B</div>
<svg class="abs" style="left:655px;top:600.9px" width="8" height="11" viewBox="0 0 8 11"><path d="M1 0V5Q1 8 4 8Q7 8 7 5V0M0.5 10.2H7.5" stroke="#777" stroke-width="1.2" fill="none"/></svg>
<svg class="abs" style="left:683px;top:601.4px" width="8" height="10" viewBox="0 0 8 10"><path d="M3 0.5H8M0 9.5H5M5.5 0.5L2.5 9.5" stroke="#777" stroke-width="1.2" fill="none"/></svg>
<div class="t" style="left:709.5px;top:602.4px;font-size:9px;line-height:6px;color:#888;letter-spacing:-0.5px">···</div>
<div class="abs" style="left:721.6px;top:605.0px;width:0;height:0;border-top:3.2px solid #777;border-left:2.6px solid transparent;border-right:2.6px solid transparent"></div>
<svg class="abs" style="left:746.5px;top:600.9px" width="10" height="11" viewBox="0 0 10 11"><path d="M1.5 8L5 0.5L8.5 8M2.8 5.3H7.2" stroke="#777" stroke-width="1.1" fill="none"/><path d="M0 10.2H10" stroke="#777" stroke-width="1.1"/></svg>
<div class="abs" style="left:759.1px;top:605.0px;width:0;height:0;border-top:3.2px solid #777;border-left:2.6px solid transparent;border-right:2.6px solid transparent"></div>
<svg class="abs" style="left:784.5px;top:601.4px" width="10" height="10" viewBox="0 0 10 10"><rect width="10" height="10" rx="1" fill="#777"/><path d="M2.5 8.5L5 1.8L7.5 8.5M3.4 6.3H6.6" stroke="#fff" stroke-width="1.1" fill="none"/></svg>
<div class="abs" style="left:796.6px;top:605.0px;width:0;height:0;border-top:3.2px solid #777;border-left:2.6px solid transparent;border-right:2.6px solid transparent"></div>
<div class="t" style="left:829.6px;top:601.4px;font-size:10px;line-height:10px;color:#999">默认字号</div>
<div class="abs" style="left:871.1px;top:604.4px;width:1.6px;height:1.6px;background:#999;border-radius:50%"></div>
<div class="t" style="left:893.4px;top:601.4px;font-size:10px;line-height:10px;color:#999">默认字体</div>
<div class="abs" style="left:934.9px;top:604.4px;width:1.6px;height:1.6px;background:#999;border-radius:50%"></div>
<div class="t" style="left:956.6px;top:601.4px;font-size:10px;line-height:10px;color:#999">默认行高</div>
<div class="abs" style="left:998.1px;top:604.4px;width:1.6px;height:1.6px;background:#999;border-radius:50%"></div>
<svg class="abs" style="left:1028px;top:601.4px" width="11" height="10" viewBox="0 0 11 10"><circle cx="1.2" cy="1.2" r="1.1" fill="#666"/><circle cx="1.2" cy="5" r="1.1" fill="#666"/><circle cx="1.2" cy="8.8" r="1.1" fill="#666"/><path d="M3.5 1.2H11M3.5 5H11M3.5 8.8H11" stroke="#666" stroke-width="1.1"/></svg>
<svg class="abs" style="left:543px;top:629.4px" width="10" height="10" viewBox="0 0 10 10"><path d="M3.5 1.2H10M3.5 5H10M3.5 8.8H10" stroke="#777" stroke-width="1.1"/><path d="M0.5 0.3H1.4V2.3M0.3 4H1.8L0.3 6H1.9M0.3 7.8H1.8V9.6H0.3" stroke="#777" stroke-width="0.6" fill="none"/></svg>
<svg class="abs" style="left:569.5px;top:628.9px" width="11" height="11" viewBox="0 0 11 11"><path d="M9 5.5V10H0.6V1.2H8" stroke="#777" stroke-width="1.1" fill="none"/><path d="M2.8 4.8L5 7L10.5 1" stroke="#777" stroke-width="1.2" fill="none"/></svg>
<svg class="abs" style="left:597.5px;top:629.9px" width="10" height="9" viewBox="0 0 10 9"><path d="M0 0.6H10M0 3.2H7M0 5.8H10M0 8.4H6" stroke="#777" stroke-width="1"/></svg>
<div class="abs" style="left:609.1px;top:633.0px;width:0;height:0;border-top:3.2px solid #777;border-left:2.6px solid transparent;border-right:2.6px solid transparent"></div>
<svg class="abs" style="left:634.4px;top:629.4px" width="11" height="10" viewBox="0 0 11 10"><path d="M0 0.6H11M4 3.2H11M4 5.8H11M0 9.2H11" stroke="#777" stroke-width="1.1"/><path d="M0 2.5L2.6 4.5L0 6.5Z" fill="#777"/></svg>
<div class="abs" style="left:647.1px;top:633.0px;width:0;height:0;border-top:3.2px solid #777;border-left:2.6px solid transparent;border-right:2.6px solid transparent"></div>
<svg class="abs" style="left:680px;top:629.4px" width="10" height="10" viewBox="0 0 10 10"><circle cx="5" cy="5" r="4.4" stroke="#777" stroke-width="1" fill="none"/><circle cx="3.4" cy="4" r="0.7" fill="#777"/><circle cx="6.6" cy="4" r="0.7" fill="#777"/><path d="M2.8 6Q5 8.2 7.2 6" stroke="#777" stroke-width="0.9" fill="none"/></svg>
<div class="abs" style="left:692.1px;top:633.0px;width:0;height:0;border-top:3.2px solid #777;border-left:2.6px solid transparent;border-right:2.6px solid transparent"></div>
<svg class="abs" style="left:717.8px;top:629.2px" width="10.4" height="10.4" viewBox="0 0 10 10"><path d="M4.2 5.8L5.8 4.2M3 5L1.5 6.5Q0.3 7.7 1.3 8.7Q2.3 9.7 3.5 8.5L5 7M5 3L6.5 1.5Q7.7 0.3 8.7 1.3Q9.7 2.3 8.5 3.5L7 5" stroke="#777" stroke-width="1" fill="none"/></svg>
<svg class="abs" style="left:745px;top:629.9px" width="10" height="9" viewBox="0 0 10 9"><rect x="0.5" y="0.5" width="9" height="8" stroke="#777" fill="none"/><path d="M1 8L3.5 4.5L5.5 6.5L7 4.8L9 8Z" fill="#777"/><circle cx="7" cy="2.6" r="0.9" fill="#777"/></svg>
<div class="abs" style="left:756.6px;top:633.0px;width:0;height:0;border-top:3.2px solid #777;border-left:2.6px solid transparent;border-right:2.6px solid transparent"></div>
<svg class="abs" style="left:783px;top:629.4px" width="10" height="10" viewBox="0 0 10 10"><path d="M0 0.8H10M0 9.2H10" stroke="#777" stroke-width="1.1"/><path d="M0 5H2M3 5H7M8 5H10" stroke="#777" stroke-width="1"/></svg>
<svg class="abs" style="left:818px;top:629.4px" width="10.5" height="10" viewBox="0 0 11 10"><path d="M2.5 2.5H6Q9.8 2.5 9.8 6Q9.8 9.5 6.5 9.5" stroke="#777" stroke-width="1.2" fill="none"/><path d="M0 2.5L3.2 0V5Z" fill="#777"/></svg>
<svg class="abs" style="left:845px;top:629.4px" width="10.5" height="10" viewBox="0 0 11 10"><path d="M8.5 2.5H5Q1.2 2.5 1.2 6Q1.2 9.5 4.5 9.5" stroke="#777" stroke-width="1.2" fill="none"/><path d="M11 2.5L7.8 0V5Z" fill="#777"/></svg>
<svg class="abs" style="left:881px;top:629.4px" width="10" height="10" viewBox="0 0 10 10"><path d="M0.6 3V0.6H3M7 0.6H9.4V3M9.4 7V9.4H7M3 9.4H0.6V7" stroke="#666" stroke-width="1.2" fill="none"/></svg>
<div class="t" style="left:537.8px;top:667.1px;font-size:9.9px;line-height:10px;color:#c8c8c8">请输入内容...</div>
</div></div>
<div class="abs" style="left:1074px;top:102px;width:4px;height:577px;background:#e6e6e6"></div>
<div class="abs" style="left:1074px;top:101.9px;width:4px;height:188.6px;background:#a6a6a6;border-radius:2px"></div>
</div></div>
</body></html>
